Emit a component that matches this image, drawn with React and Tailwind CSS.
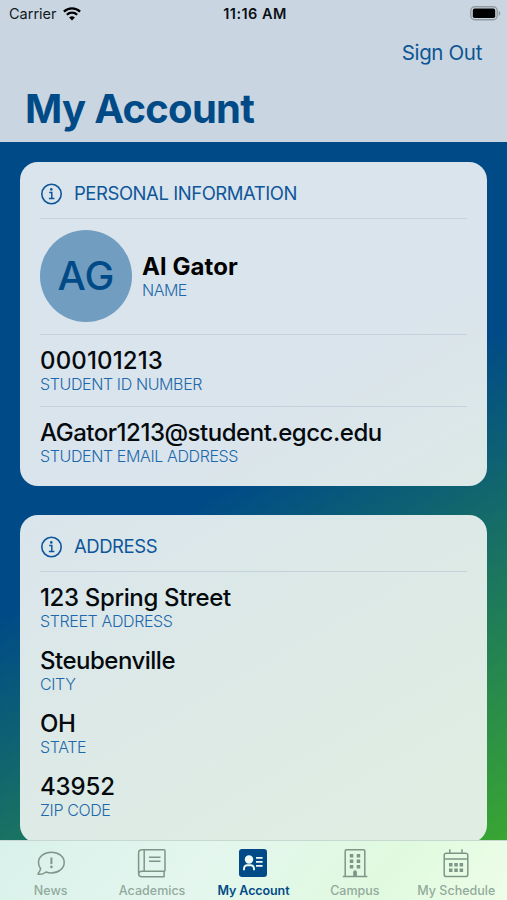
import React from "react";

const InfoIcon = () => (
  <svg width="22" height="22" viewBox="0 0 22 22" fill="none">
    <circle cx="11.5" cy="11" r="9.7" stroke="#0e569a" strokeWidth="1.6" />
    <circle cx="11.3" cy="6.4" r="1.3" fill="#0e569a" />
    <path d="M9.2 9.6h2.600v5.800M8.900 15.500h5.500" stroke="#0e569a" strokeWidth="1.500" />
  </svg>
);

const WifiIcon = () => (
  <svg width="18" height="14" viewBox="0 0 18 14" fill="none">
    <path d="M0.9 4.6a11.6 11.6 0 0 1 16.2 0" stroke="#000" strokeWidth="2.3" />
    <path d="M3.8 7.8a7.4 7.4 0 0 1 10.4 0" stroke="#000" strokeWidth="2.2" />
    <path d="M9 13.6L6.1 10.6a4.2 4.2 0 0 1 5.8 0z" fill="#000" />
  </svg>
);

const BatteryIcon = () => (
  <svg width="31" height="15" viewBox="0 0 31 15" fill="none">
    <rect x="0.8" y="0.8" width="26.4" height="13" rx="4" stroke="#929a9f" strokeWidth="1.4" />
    <rect x="2.8" y="2.6" width="22.4" height="9.4" rx="1.8" fill="#000" />
    <path d="M28.6 5v4.8c1-.3 1.7-1.3 1.7-2.4S29.6 5.3 28.6 5z" fill="#929a9f" />
  </svg>
);

const NewsIcon = () => (
  <svg width="30" height="30" viewBox="0 0 30 30" fill="none" stroke="currentColor" strokeWidth="1.5">
    <path
      d="M15.4 4.2c7.3 0 12.8 4.5 12.8 10.3S22.7 24.9 15.4 24.9c-1.9 0-3.7-.3-5.3-.9-1.9 1.4-4.9 2.600-7.600 2.300-.5-.1-.6-.6-.3-.9 1.200-1.400 2.100-3.300 2.400-4.800C3.200 18.900 2.500 16.800 2.500 14.500c0-5.800 5.600-10.300 12.900-10.300z"
      strokeLinejoin="round"
    />
    <path d="M15.4 9.500v6.600" strokeWidth="2" />
    <circle cx="15.4" cy="18.900" r="1.3" fill="currentColor" stroke="none" />
  </svg>
);

const AcademicsIcon = () => (
  <svg width="30" height="30" viewBox="0 0 30 30" fill="none" stroke="currentColor" strokeWidth="1.5">
    <path
      d="M28 23.200V2.800c0-.6-.4-1-1-1H5C3 1.800 1.600 3.200 1.600 5.200v20.400c0 1.900 1.400 3.200 3.300 3.200h22.700M28 23.200H5c-2 0-3.400 1-3.400 2.800M27.100 23.200v5.600M7.200 1.800v21.400"
      strokeLinejoin="round"
    />
    <path d="M12 9.300h11.500M12 13.300h11.500" />
  </svg>
);

const AccountIcon = () => (
  <svg width="30" height="30" viewBox="0 0 30 30" fill="none">
    <rect x="1" y="1" width="28" height="28" rx="3" fill="#004b87" />
    <circle cx="11" cy="11.500" r="4.200" fill="#f0fbf3" />
    <path d="M6 22.200v-1.400c0-2.400 1.600-3.800 3.600-3.600h2.800c2-.2 3.600 1.200 3.600 3.600v1.400" stroke="#f0fbf3" strokeWidth="1.900" />
    <path d="M18 9.800h6.600M18 13.800h6.600M18 17.800h6.600" stroke="#f0fbf3" strokeWidth="1.700" />
  </svg>
);

const CampusIcon = () => (
  <svg width="30" height="30" viewBox="0 0 30 30" fill="none" stroke="currentColor" strokeWidth="1.5">
    <path d="M2.800 28.500h24.500M5.200 28.500V3c0-.7.5-1.200 1.200-1.200h17.200c.7 0 1.200.5 1.200 1.200v25.500" />
    <g fill="currentColor" stroke="none">
      <rect x="9.800" y="6" width="3.500" height="3.500" />
      <rect x="16.700" y="6" width="3.500" height="3.500" />
      <rect x="9.800" y="11.500" width="3.500" height="3.500" />
      <rect x="16.700" y="11.500" width="3.500" height="3.500" />
      <rect x="9.800" y="17" width="3.500" height="3.500" />
      <rect x="16.700" y="17" width="3.500" height="3.500" />
      <path d="M13.200 28.500v-4.300a1.850 1.850 0 0 1 3.700 0v4.300z" />
    </g>
  </svg>
);

const ScheduleIcon = () => (
  <svg width="30" height="30" viewBox="0 0 30 30" fill="none" stroke="currentColor" strokeWidth="1.5">
    <rect x="3.200" y="5.300" width="23.600" height="23.300" rx="2.200" />
    <path d="M3.200 11h23.600M8.800 1.300v4M21 1.300v4" />
    <g fill="currentColor" stroke="none">
      <rect x="8" y="15" width="3.500" height="3.500" />
      <rect x="13.300" y="15" width="3.500" height="3.500" />
      <rect x="18.600" y="15" width="3.500" height="3.500" />
      <rect x="8" y="20.500" width="3.500" height="3.500" />
      <rect x="13.300" y="20.500" width="3.500" height="3.500" />
      <rect x="18.600" y="20.500" width="3.500" height="3.500" />
    </g>
  </svg>
);

const tabs = [
  { label: "News", Icon: NewsIcon },
  { label: "Academics", Icon: AcademicsIcon },
  { label: "My Account", Icon: AccountIcon, active: true },
  { label: "Campus", Icon: CampusIcon },
  { label: "My Schedule", Icon: ScheduleIcon },
];

const address = [
  { label: "STREET ADDRESS", value: "123 Spring Street", spacing: "tracking-[-0.35px]" },
  { label: "CITY", value: "Steubenville", spacing: "tracking-[-0.5px]" },
  { label: "STATE", value: "OH", spacing: "tracking-[-0.35px]" },
  { label: "ZIP CODE", value: "43952", spacing: "tracking-[-0.15px]" },
];

const CardTitle = ({ text }) => (
  <div className="flex items-center gap-3 h-[57px] pt-[8px] border-b border-[#c5d1dc]">
    <InfoIcon />
    <h2 className="text-[18.5px] tracking-[-0.45px] text-[#0e569a]">{text}</h2>
  </div>
);

const Field = ({ label, value, spacing }) => (
  <div>
    <p className={`text-[24px] leading-[28px] font-medium text-[#050a0e] whitespace-nowrap ${spacing}`}>
      {value}
    </p>
    <p className="mt-[-1px] text-[16px] leading-[20px] font-light tracking-[-0.38px] text-[#1c68ab]">
      {label}
    </p>
  </div>
);

const App = () => {
  return (
    <div className="w-[507px] h-[900px] flex flex-col overflow-hidden font-['Inter',sans-serif] bg-[linear-gradient(150deg,#004b87_52%,#40b028_100%)]">
      {/* Header */}
      <header className="h-[142px] shrink-0 bg-[#c9d6e1]">
        <div className="grid grid-cols-3 items-center h-[27px] pl-[9px] pr-[6px]">
          <div className="flex items-center gap-[6px] text-[14.5px] text-[#111a22]">
            <span>Carrier</span>
            <WifiIcon />
          </div>
          <div className="text-center text-[14.5px] font-semibold tracking-[0.45px] text-[#0a1015]">
            11:16 AM
          </div>
          <div className="flex justify-end">
            <BatteryIcon />
          </div>
        </div>
        <div className="flex justify-end pr-[25px] pt-[11px]">
          <button className="text-[20.5px] leading-[30px] tracking-[-0.35px] text-[#0d5594]">Sign Out</button>
        </div>
        <h1 className="pl-[25px] pt-[16px] text-[40px] leading-[50px] font-bold tracking-[-0.7px] text-[#004b87]">
          My Account
        </h1>
      </header>

      {/* Cards */}
      <main className="h-[698px] shrink-0 overflow-hidden px-5 pt-5 flex flex-col gap-[29px]">
        <section className="h-[324px] shrink-0 rounded-[18px] bg-[linear-gradient(150deg,#dae4ec_65%,#dce9e6_100%)] px-5">
          <CardTitle text="PERSONAL INFORMATION" />
          <div className="flex items-center gap-[10px] h-[116px] pb-[2px] border-b border-[#c5d1dc]">
            <div className="size-[92px] shrink-0 rounded-full bg-[#719dc1] flex items-center justify-center text-[40px] font-medium text-[#004b87]">
              AG
            </div>
            <div className="pt-px">
              <p className="text-[24px] leading-[28px] font-bold tracking-[0.1px] text-black">Al Gator</p>
              <p className="mt-[-1px] text-[16px] leading-[20px] font-light tracking-[-0.5px] text-[#1c68ab]">NAME</p>
            </div>
          </div>
          <div className="h-[72px] pt-[12px] border-b border-[#c5d1dc]">
            <Field label="STUDENT ID NUMBER" value="000101213" spacing="tracking-[0.15px]" />
          </div>
          <div className="pt-[12px]">
            <Field label="STUDENT EMAIL ADDRESS" value="AGator1213@student.egcc.edu" spacing="tracking-[-0.47px]" />
          </div>
        </section>

        <section className="h-[328px] shrink-0 rounded-[18px] bg-[linear-gradient(150deg,#dae5ec_0%,#dce9e7_40%,#e0eee2_100%)] px-5">
          <CardTitle text="ADDRESS" />
          <div className="flex flex-col gap-[16px] pt-[12px]">
            {address.map((item) => (
              <Field key={item.label} {...item} />
            ))}
          </div>
        </section>
      </main>

      {/* Tab bar */}
      <nav className="h-[60px] shrink-0 grid grid-cols-5 border-t border-[#c6d8d0] bg-[linear-gradient(125deg,#d9f1eb_0%,#e4f6ee_40%,#e0fadf_75%,#eefde8_100%)]">
        {tabs.map(({ label, Icon, active }) => (
          <div
            key={label}
            className={`flex flex-col items-center pt-[7px] whitespace-nowrap text-[12.5px] ${
              active ? "font-semibold tracking-[-0.1px] text-[#004b87]" : "font-medium text-[#92aa9c]"
            }`}
          >
            <span className={active ? "h-[30px]" : "h-[30px] text-[#7e9688]"}>
              <Icon />
            </span>
            <span className="leading-[16px] mt-[5px]">{label}</span>
          </div>
        ))}
      </nav>
    </div>
  );
};

export default App;
